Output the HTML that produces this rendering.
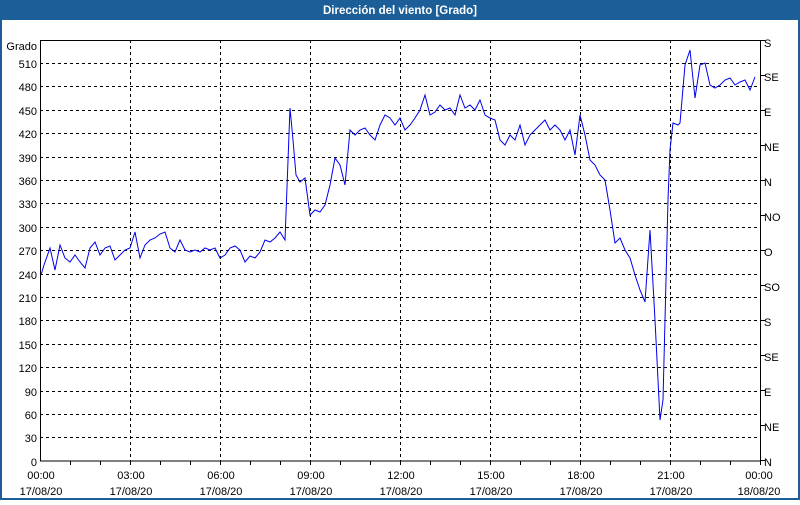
<!DOCTYPE html>
<html><head><style>
body{margin:0;width:800px;height:500px;overflow:hidden;background:#fff;font-family:"Liberation Sans",sans-serif;}
</style></head><body>
<svg width="800" height="500" xmlns="http://www.w3.org/2000/svg" font-family="Liberation Sans, sans-serif" font-size="11">
<rect x="0" y="0" width="800" height="500" fill="#1c5f98"/>
<rect x="2" y="20" width="796" height="478" fill="#fff"/>
<text x="400" y="14" fill="#fff" font-weight="bold" text-anchor="middle" font-size="11.5">Dirección del viento [Grado]</text>
<g stroke="#000" stroke-dasharray="3,3" stroke-width="1">
<line x1="40" x2="761" y1="63.5" y2="63.5"/><line x1="40" x2="761" y1="86.5" y2="86.5"/><line x1="40" x2="761" y1="110.5" y2="110.5"/><line x1="40" x2="761" y1="133.5" y2="133.5"/><line x1="40" x2="761" y1="157.5" y2="157.5"/><line x1="40" x2="761" y1="180.5" y2="180.5"/><line x1="40" x2="761" y1="203.5" y2="203.5"/><line x1="40" x2="761" y1="227.5" y2="227.5"/><line x1="40" x2="761" y1="250.5" y2="250.5"/><line x1="40" x2="761" y1="274.5" y2="274.5"/><line x1="40" x2="761" y1="297.5" y2="297.5"/><line x1="40" x2="761" y1="320.5" y2="320.5"/><line x1="40" x2="761" y1="344.5" y2="344.5"/><line x1="40" x2="761" y1="367.5" y2="367.5"/><line x1="40" x2="761" y1="391.5" y2="391.5"/><line x1="40" x2="761" y1="414.5" y2="414.5"/><line x1="40" x2="761" y1="437.5" y2="437.5"/>
<line x1="130.5" x2="130.5" y1="40" y2="461"/><line x1="220.5" x2="220.5" y1="40" y2="461"/><line x1="310.5" x2="310.5" y1="40" y2="461"/><line x1="400.5" x2="400.5" y1="40" y2="461"/><line x1="490.5" x2="490.5" y1="40" y2="461"/><line x1="580.5" x2="580.5" y1="40" y2="461"/><line x1="670.5" x2="670.5" y1="40" y2="461"/>
</g>
<rect x="40.5" y="40.5" width="720" height="420.5" fill="none" stroke="#000"/>
<g stroke="#000">
<path d="M70.5 461v4M100.5 461v4M130.5 461v4M160.5 461v4M190.5 461v4M220.5 461v4M250.5 461v4M280.5 461v4M310.5 461v4M340.5 461v4M370.5 461v4M400.5 461v4M430.5 461v4M460.5 461v4M490.5 461v4M520.5 461v4M550.5 461v4M580.5 461v4M610.5 461v4M640.5 461v4M670.5 461v4M700.5 461v4M730.5 461v4M760.5 461v4"/>
<path d="M761 40.5h4M761 75.5h4M761 110.5h4M761 145.5h4M761 180.5h4M761 215.5h4M761 250.5h4M761 285.5h4M761 320.5h4M761 355.5h4M761 390.5h4M761 425.5h4M761 460.5h4"/>
</g>
<g text-anchor="end" fill="#000">
<text x="37" y="50">Grado</text>
<text x="37" y="68">510</text><text x="37" y="91">480</text><text x="37" y="115">450</text><text x="37" y="138">420</text><text x="37" y="162">390</text><text x="37" y="185">360</text><text x="37" y="208">330</text><text x="37" y="232">300</text><text x="37" y="255">270</text><text x="37" y="279">240</text><text x="37" y="302">210</text><text x="37" y="325">180</text><text x="37" y="349">150</text><text x="37" y="372">120</text><text x="37" y="396">90</text><text x="37" y="419">60</text><text x="37" y="442">30</text><text x="37" y="466">0</text>
</g>
<g fill="#000">
<text x="764" y="47">S</text><text x="764" y="81">SE</text><text x="764" y="116">E</text><text x="764" y="151">NE</text><text x="764" y="186">N</text><text x="764" y="221">NO</text><text x="764" y="256">O</text><text x="764" y="291">SO</text><text x="764" y="326">S</text><text x="764" y="361">SE</text><text x="764" y="396">E</text><text x="764" y="431">NE</text><text x="764" y="466">N</text>
</g>
<g text-anchor="middle" fill="#000">
<text x="41" y="479">00:00</text><text x="41" y="495">17/08/20</text>
<text x="131" y="479">03:00</text><text x="131" y="495">17/08/20</text>
<text x="221" y="479">06:00</text><text x="221" y="495">17/08/20</text>
<text x="311" y="479">09:00</text><text x="311" y="495">17/08/20</text>
<text x="401" y="479">12:00</text><text x="401" y="495">17/08/20</text>
<text x="491" y="479">15:00</text><text x="491" y="495">17/08/20</text>
<text x="581" y="479">18:00</text><text x="581" y="495">17/08/20</text>
<text x="671" y="479">21:00</text><text x="671" y="495">17/08/20</text>
<text x="759" y="479">00:00</text><text x="759" y="495">18/08/20</text>
</g>
<polyline fill="none" stroke="#0000ee" stroke-width="1" points="41,275 44,265 50,248 55,270 60,245 65,258 70,262 75,255 80,262 85,268 90,248 95,242 100,255 105,248 110,246 115,260 120,255 125,250 130,248 135,232 140,258 145,245 150,240 155,238 160,234 165,232 170,248 175,252 180,240 185,250 190,252 195,250 200,252 205,248 210,250 215,248 220,258 225,255 230,248 235,246 240,250 245,262 250,256 255,258 260,252 265,240 270,242 275,238 280,232 285,240 290,108 293,140 296,175 300,182 305,178 310,215 315,210 320,212 325,205 330,185 335,158 340,165 345,185 350,130 355,135 360,130 365,128 370,135 375,140 380,125 385,115 390,118 395,125 400,118 405,130 410,125 415,118 420,110 425,95 430,115 435,112 440,105 445,110 450,108 455,115 460,95 465,108 470,105 475,110 480,100 485,115 490,118 495,120 500,140 505,145 510,135 515,140 520,125 525,145 530,135 535,130 540,125 545,120 550,130 555,125 560,130 565,140 570,130 575,155 580,115 585,135 590,160 595,165 600,175 605,180 610,210 615,243 620,238 625,250 630,258 635,275 640,290 645,302 650,230 655,320 660,420 663,400 665,320 668,200 670,150 673,123 678,125 680,123 685,65 690,50 695,98 700,65 705,63 710,85 715,88 720,85 725,80 730,78 735,85 740,82 745,80 750,90 755,77"/>
</svg>
</body></html>
